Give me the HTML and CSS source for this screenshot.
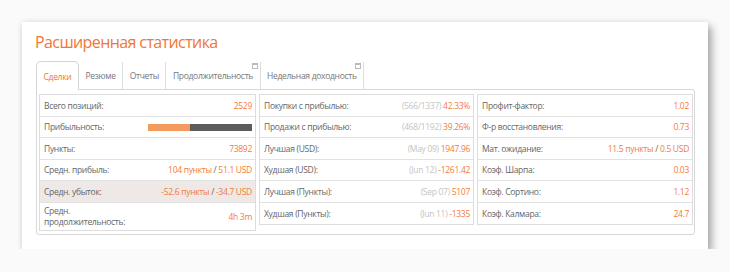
FILE: index.html
```html
<!DOCTYPE html>
<html lang="ru">
<head>
    <meta charset="UTF-8">
    <title>Расширенная статистика</title>
    <link rel="stylesheet" href="styles.css">
</head>
<body>
    <div class="card">
        <h2 class="title">Расширенная статистика</h2>

        <ul class="tabs">
            <li class="tab active">Сделки</li>
            <li class="tab">Резюме</li>
            <li class="tab">Отчеты</li>
            <li class="tab">Продолжительность<span class="win-icon"></span></li>
            <li class="tab">Недельная доходность<span class="win-icon"></span></li>
        </ul>

        <div class="tab-body">
            <div class="stat-table">
                <div class="row"><span class="label">Всего позиций:</span><span class="value">2529</span></div>
                <div class="row"><span class="label">Прибыльность:</span><span class="value"><span class="bar"><span class="bar-fill" style="width: 40%"></span></span></span></div>
                <div class="row"><span class="label">Пункты:</span><span class="value">73892</span></div>
                <div class="row"><span class="label">Средн. прибыль:</span><span class="value">104 пункты <span class="sep">/</span> 51.1 USD</span></div>
                <div class="row highlight"><span class="label">Средн. убыток:</span><span class="value">-52.6 пункты <span class="sep">/</span> -34.7 USD</span></div>
                <div class="row tall"><span class="label">Средн. продолжительность:</span><span class="value">4h 3m</span></div>
            </div>

            <div class="stat-table">
                <div class="row"><span class="label">Покупки с прибылью:</span><span class="value"><span class="muted">(566/1337)</span> 42.33%</span></div>
                <div class="row"><span class="label">Продажи с прибылью:</span><span class="value"><span class="muted">(468/1192)</span> 39.26%</span></div>
                <div class="row"><span class="label">Лучшая (USD):</span><span class="value"><span class="muted">(May 09)</span> 1947.96</span></div>
                <div class="row"><span class="label">Худшая (USD):</span><span class="value"><span class="muted">(Jun 12)</span> -1261.42</span></div>
                <div class="row"><span class="label">Лучшая (Пункты):</span><span class="value"><span class="muted">(Sep 07)</span> 5107</span></div>
                <div class="row"><span class="label">Худшая (Пункты):</span><span class="value"><span class="muted">(Jun 11)</span> -1335</span></div>
            </div>

            <div class="stat-table">
                <div class="row"><span class="label">Профит-фактор:</span><span class="value">1.02</span></div>
                <div class="row"><span class="label">Ф-р восстановления:</span><span class="value">0.73</span></div>
                <div class="row"><span class="label">Мат. ожидание:</span><span class="value">11.5 пункты <span class="sep">/</span> 0.5 USD</span></div>
                <div class="row"><span class="label">Коэф. Шарпа:</span><span class="value">0.03</span></div>
                <div class="row"><span class="label">Коэф. Сортино:</span><span class="value">1.12</span></div>
                <div class="row"><span class="label">Коэф. Калмара:</span><span class="value">24.7</span></div>
            </div>
        </div>
    </div>
</body>
</html>
```

FILE: styles.css
```css
body {
    margin: 0;
    background-color: #fafafa;
    font-family: "Open Sans", sans-serif;
}
.card {
    margin: 22px 0 0 22px;
    width: 659px;
    height: 218px;
    padding: 9px 13px 0 14px;
    background-color: white;
    box-shadow: 0 0 6px rgba(0, 0, 0, 0.1), 4px 5px 8px rgba(0, 0, 0, 0.3);
}
.title {
    margin: 0 0 0 -1px;
    font-size: 16px;
    font-weight: normal;
    letter-spacing: -0.6px;
    line-height: 22px;
    color: #f27634;
}
.tabs {
    list-style-type: none;
    margin: 8px 0 0 0;
    padding: 0;
    display: flex;
    height: 28px;
}
.tab {
    position: relative;
    display: flex;
    align-items: center;
    padding: 0 6.5px;
    margin-top: 1px;
    font-size: 8.5px;
    letter-spacing: -0.3px;
    color: #777;
    border-right: 1px solid #ddd;
}
.tab.active {
    margin-top: 0;
    color: #f27634;
    background-color: white;
    border: 1px solid #d4d4d4;
    border-bottom: none;
    border-radius: 5px 5px 0 0;
    margin-bottom: -1px;
    z-index: 1;
}
.win-icon {
    position: absolute;
    top: 1px;
    right: 2px;
    width: 4px;
    height: 3px;
    border: 1px solid #bbb;
    border-top-width: 2px;
}
.tab-body {
    border: 1px solid #d8d8d8;
    border-radius: 0 3px 3px 3px;
    padding: 4px 3px 3px 2px;
    display: grid;
    grid-template-columns: 217px 215px 216px;
    gap: 3px;
    align-items: start;
}
.stat-table {
    border: 1px solid #ddd;
}
.row {
    display: flex;
    align-items: center;
    height: 20.6px;
    font-size: 8.5px;
    letter-spacing: -0.3px;
    line-height: 11.5px;
    color: #666;
    border-top: 1px solid #e2e2e2;
}
.row:first-child {
    border-top: none;
}
.row.tall {
    height: 27px;
}
.row.highlight {
    background-color: #eee8e6;
}
.label {
    width: 48%;
    padding-left: 4px;
}
.value {
    flex: 1;
    text-align: right;
    padding-right: 3px;
    color: #f47b3c;
    white-space: nowrap;
}
.sep {
    color: #666;
}
.muted {
    color: #c4c4c4;
}
.bar {
    display: inline-block;
    vertical-align: middle;
    width: 104px;
    height: 7px;
    background-color: #5c5c5c;
}
.bar-fill {
    display: block;
    height: 100%;
    background-color: #f39a5e;
}
```
